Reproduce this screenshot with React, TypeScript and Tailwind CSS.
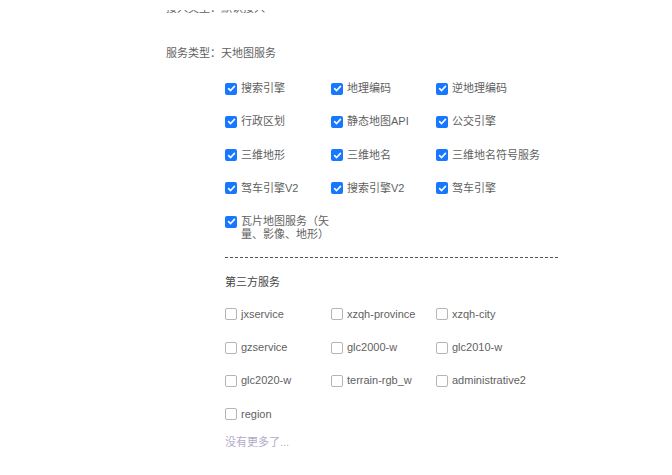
const tdtServices = [
  "搜索引擎",
  "地理编码",
  "逆地理编码",
  "行政区划",
  "静态地图API",
  "公交引擎",
  "三维地形",
  "三维地名",
  "三维地名符号服务",
  "驾车引擎V2",
  "搜索引擎V2",
  "驾车引擎",
  "瓦片地图服务（矢量、影像、地形）",
];

const thirdServices = [
  "jxservice",
  "xzqh-province",
  "xzqh-city",
  "gzservice",
  "glc2000-w",
  "glc2010-w",
  "glc2020-w",
  "terrain-rgb_w",
  "administrative2",
  "region",
];

function Box({ checked }: { checked: boolean }) {
  if (checked) {
    return (
      <span className="mt-[0.5px] mr-[4px] flex h-[12px] w-[12px] shrink-0 items-center justify-center rounded-[2px] bg-[#1677ff]">
        <svg width="9" height="9" viewBox="0 0 10 10" fill="none">
          <path d="M1.8 5.2 L4 7.3 L8.3 2.6" stroke="white" strokeWidth="1.8" strokeLinecap="round" strokeLinejoin="round" />
        </svg>
      </span>
    );
  }
  return <span className="mt-[0.5px] mr-[4px] h-[12px] w-[12px] shrink-0 rounded-[2px] border border-[#b5b5b5] bg-white" />;
}

function CheckGrid({ items, checked }: { items: string[]; checked: boolean }) {
  return (
    <div className="grid grid-cols-[106px_105px_122px] gap-y-[20.33px]">
      {items.map((name) => (
        <label key={name} className="flex items-start text-[11px] leading-[13px] text-[#5f5f5f]">
          <Box checked={checked} />
          <span className="max-w-[89px] whitespace-normal">{name}</span>
        </label>
      ))}
    </div>
  );
}

export default function App() {
  return (
    <div
      className="h-[475px] w-[672px] overflow-hidden bg-white pl-[166px]"
      style={{ fontFamily: '"Liberation Sans", "Noto Sans CJK SC", sans-serif' }}
    >
      {/* previous row, scrolled mostly out of view under the header */}
      <div className="pt-[10px]">
        <div className="h-[3px] overflow-hidden">
          <div className="-mt-[9px] flex h-[14px] items-center text-[11px] leading-[14px] text-[#5f5f5f]">
            <span>接入类型：</span>
            <span>默认接入</span>
          </div>
        </div>
      </div>

      <div className="mt-[33px] flex h-[14px] items-center text-[11px] leading-[14px] text-[#5f5f5f]">
        <span>服务类型：</span>
        <span>天地图服务</span>
      </div>

      <div className="ml-[59px] w-[333px]">
        <div className="mt-[22px]">
          <CheckGrid items={tdtServices} checked />
        </div>

        <div className="mt-[15.5px] border-t border-dashed border-[#555]" />

        <div className="mt-[16.7px] h-[14px] text-[11px] leading-[14px] text-[#444]">第三方服务</div>

        <div className="mt-[19.3px]">
          <CheckGrid items={thirdServices} checked={false} />
        </div>

        <div className="mt-[14px] h-[14px] text-[11px] leading-[14px] text-[#b1abc9]">没有更多了...</div>
      </div>
    </div>
  );
}
